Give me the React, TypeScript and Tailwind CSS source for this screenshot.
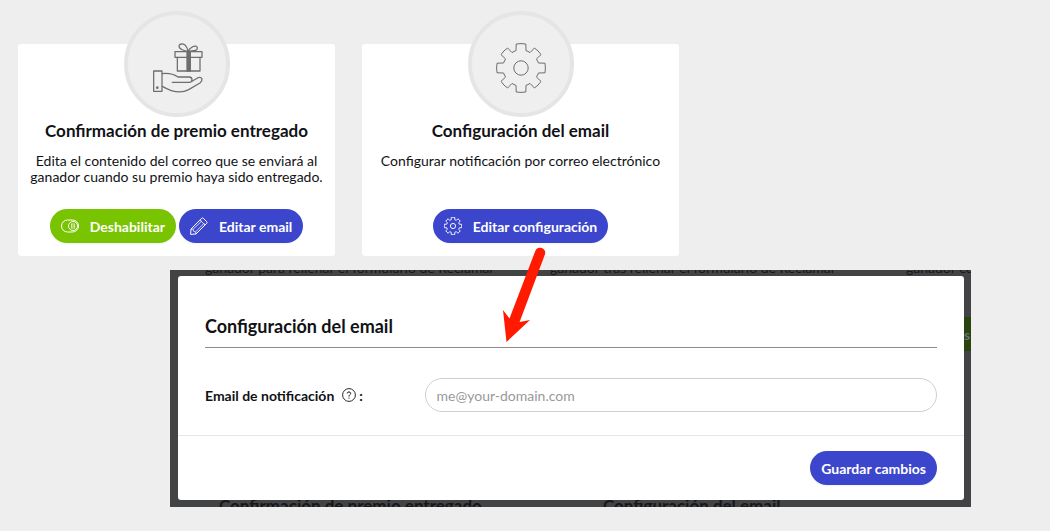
import type { ReactNode } from 'react';

type IconProps = {
  size?: number;
  strokeWidth?: number;
};

type ConfigCardProps = {
  icon: ReactNode;
  title: string;
  description: string;
  children: ReactNode;
};

type PillButtonProps = {
  icon?: ReactNode;
  color?: 'blue' | 'green';
  children: ReactNode;
};

const GearIcon = ({ size = 50, strokeWidth = 1 }: IconProps) => (
  <svg
    width={size}
    height={size}
    viewBox="-25 -25 50 50"
    fill="none"
    stroke="currentColor"
    strokeWidth={strokeWidth}
    strokeLinejoin="round"
    aria-hidden="true"
  >
    <path d="M-4.8-24Q0-24.8 4.8-24L5-17.4Q7-16.8 9-15.4L13.4-20Q17.4-17.4 20-13.4L15.4-9Q16.8-7 17.4-5L24-4.8Q24.8 0 24 4.8L17.4 5Q16.8 7 15.4 9L20 13.4Q17.4 17.4 13.4 20L9 15.4Q7 16.8 5 17.4L4.8 24Q0 24.8-4.8 24L-5 17.4Q-7 16.8-9 15.4L-13.4 20Q-17.4 17.4-20 13.4L-15.4 9Q-16.8 7-17.4 5L-24 4.8Q-24.8 0-24-4.8L-17.4-5Q-16.8-7-15.4-9L-20-13.4Q-17.4-17.4-13.4-20L-9-15.4Q-7-16.8-5-17.4Z" />
    <circle r="7.2" />
  </svg>
);

const GiftHandIcon = () => (
  <svg
    width="50"
    height="50"
    viewBox="-2 0 150 150"
    fill="none"
    stroke="currentColor"
    strokeWidth="3.8"
    strokeLinejoin="round"
    strokeLinecap="round"
    overflow="visible"
    aria-hidden="true"
  >
    <rect x="3" y="84" width="25" height="61" />
    <circle cx="14" cy="134" r="2" fill="currentColor" />
    <path d="M29 92C48 90 64 94 76 102H110Q118 103 118 110Q118 117 110 118H59" />
    <path d="M118 115L136 104Q145 101 148 108Q149 114 142 120L108 140C82 154 56 146 29 130" />
    <rect x="67" y="26" width="81" height="17" />
    <path d="M74 43V84H142V43" />
    <rect x="103" y="26" width="10" height="58" fill="currentColor" />
    <path d="M106 25C96 24 79 19 79 9C80 1 91 2 97 6C103 11 105 19 106 25C110 16 122 8 131 10C138 15 133 23 123 23L106 25" />
  </svg>
);

const ToggleIcon = () => (
  <svg width="18" height="18" viewBox="0 0 18 18" fill="none" stroke="currentColor" aria-hidden="true">
    <rect x="0.5" y="3" width="17" height="12" rx="6" />
    <circle cx="12" cy="9" r="4.5" />
    <path d="M10.5 6.5v5M12 6v6M13.5 6.5v5" strokeWidth="0.7" />
  </svg>
);

const PencilIcon = () => (
  <svg
    width="18"
    height="18"
    viewBox="0 0 18 18"
    fill="none"
    stroke="currentColor"
    strokeLinejoin="round"
    aria-hidden="true"
  >
    <path d="M.6 17.4L1 12 11.7 1.2Q12.4.5 13.2 1.2L16.8 4.8Q17.5 5.5 16.8 6.2L6 17Z" />
    <path d="M10 3L15 8M1 12L3 12.2 3.6 14.3 5.7 15 6 17M3.2 12.2L12 3.8M5.7 14.8L14.3 6" strokeWidth="0.8" />
  </svg>
);

const HelpIcon = () => (
  <svg width="14" height="14" viewBox="0 0 14 14" fill="none" stroke="currentColor" aria-hidden="true">
    <circle cx="7" cy="7" r="6.4" strokeWidth="0.9" />
    <path d="M5.2 5.5Q5.3 3.9 7 3.9Q8.7 4 8.7 5.5Q8.6 6.4 7.6 7Q7 7.4 7 8.5M7 9.6V10.7" />
  </svg>
);

const PillButton = ({ icon, color = 'blue', children }: PillButtonProps) => (
  <button
    type="button"
    className={`flex h-[34px] items-center gap-[11px] rounded-full px-[11px] text-[14px] font-bold whitespace-nowrap text-white shadow-xs ${
      color === 'green' ? 'bg-[#78c400]' : 'bg-[#3c46cc]'
    }`}
  >
    {icon}
    {children}
  </button>
);

const ConfigCard = ({ icon, title, description, children }: ConfigCardProps) => (
  <section className="flex min-h-[212px] flex-col items-center rounded-[3px] bg-white px-3 pb-[13px] text-center">
    <div className="-mt-[33px] flex size-[106px] items-center justify-center rounded-full border-4 border-[#e4e5e7] bg-[#efefef] pt-[7px] text-[#6e6e6e]">
      {icon}
    </div>
    <h2 className="mt-1 text-[17px] leading-5 font-bold">{title}</h2>
    <p className="mt-3 mb-5 text-[14px] leading-4">{description}</p>
    <div className="mt-auto flex gap-[3px]">{children}</div>
  </section>
);

// Page content that stays visible around the dialog
const Backdrop = () => (
  <div
    className="absolute inset-0 flex flex-col overflow-hidden bg-[#424345] whitespace-nowrap text-[#17181a]"
    aria-hidden="true"
  >
    <div className="flex h-[6px] items-end pl-[35px] text-[14px] leading-4">
      <p className="w-[345px] shrink-0">ganador para rellenar el formulario de Reclamar</p>
      <p className="w-[356px] shrink-0">ganador tras rellenar el formulario de Reclamar</p>
      <p>ganador cuando</p>
    </div>
    <div className="mt-[41px] flex h-[34px] w-[7px] items-center self-end bg-[#2a4310] text-[14px] font-bold text-[#66707a]">
      s
    </div>
    <div className="mt-auto flex h-[11px] pl-[49px] text-[17px] leading-5 font-bold">
      <p className="w-[384px] shrink-0">Confirmación de premio entregado</p>
      <p>Configuración del email</p>
    </div>
  </div>
);

const EmailDialog = () => (
  <div
    role="dialog"
    aria-labelledby="dialog-title"
    className="relative rounded-[3px] bg-white pt-10"
  >
    <div className="px-[27px] pb-[23px]">
      <h2 id="dialog-title" className="border-b border-[#8c8c8c] pb-[11px] text-[18px] leading-5 font-bold">
        Configuración del email
      </h2>
      <div className="mt-[30px] flex items-center">
        <label htmlFor="email" className="flex w-[30%] shrink-0 items-center text-[14px] font-bold">
          Email de notificación
          <span className="mr-[3px] ml-2">
            <HelpIcon />
          </span>
          :
        </label>
        <input
          id="email"
          type="email"
          placeholder="me@your-domain.com"
          className="h-[34px] min-w-0 flex-1 rounded-full border border-[#cfcfcf] px-[11px] text-[14px] placeholder:text-[#999]"
        />
      </div>
    </div>
    <div className="flex justify-end border-t border-[#e6e6e6] px-[27px] py-[15px]">
      <PillButton>Guardar cambios</PillButton>
    </div>
  </div>
);

const Arrow = () => (
  <svg
    className="pointer-events-none absolute -top-[24px] left-[330px]"
    width="50"
    height="98"
    viewBox="500 246 50 98"
    fill="#ff1a00"
    aria-hidden="true"
  >
    <path d="M535.3 251A5 5 0 0 1 544.9 254.5L519.6 322L530 320L506.5 342L503 310L509.5 318.5Z" />
  </svg>
);

export default function App() {
  return (
    <main className="min-h-screen bg-[#eee] pt-11 pb-6 font-[Lato,sans-serif] text-[#111216]">
      <div className="grid grid-cols-3 gap-[27px] pr-[27px] pl-[18px]">
        <ConfigCard
          icon={<GiftHandIcon />}
          title="Confirmación de premio entregado"
          description="Edita el contenido del correo que se enviará al ganador cuando su premio haya sido entregado."
        >
          <PillButton color="green" icon={<ToggleIcon />}>
            Deshabilitar
          </PillButton>
          <PillButton icon={<PencilIcon />}>Editar email</PillButton>
        </ConfigCard>
        <ConfigCard
          icon={<GearIcon />}
          title="Configuración del email"
          description="Configurar notificación por correo electrónico"
        >
          <PillButton icon={<GearIcon size={18} strokeWidth={2.6} />}>Editar configuración</PillButton>
        </ConfigCard>
      </div>

      <div className="relative mt-[14px] mr-[79px] ml-[170px] pt-[6px] pr-[7px] pb-[7px] pl-2">
        <Backdrop />
        <EmailDialog />
        <Arrow />
      </div>
    </main>
  );
}
